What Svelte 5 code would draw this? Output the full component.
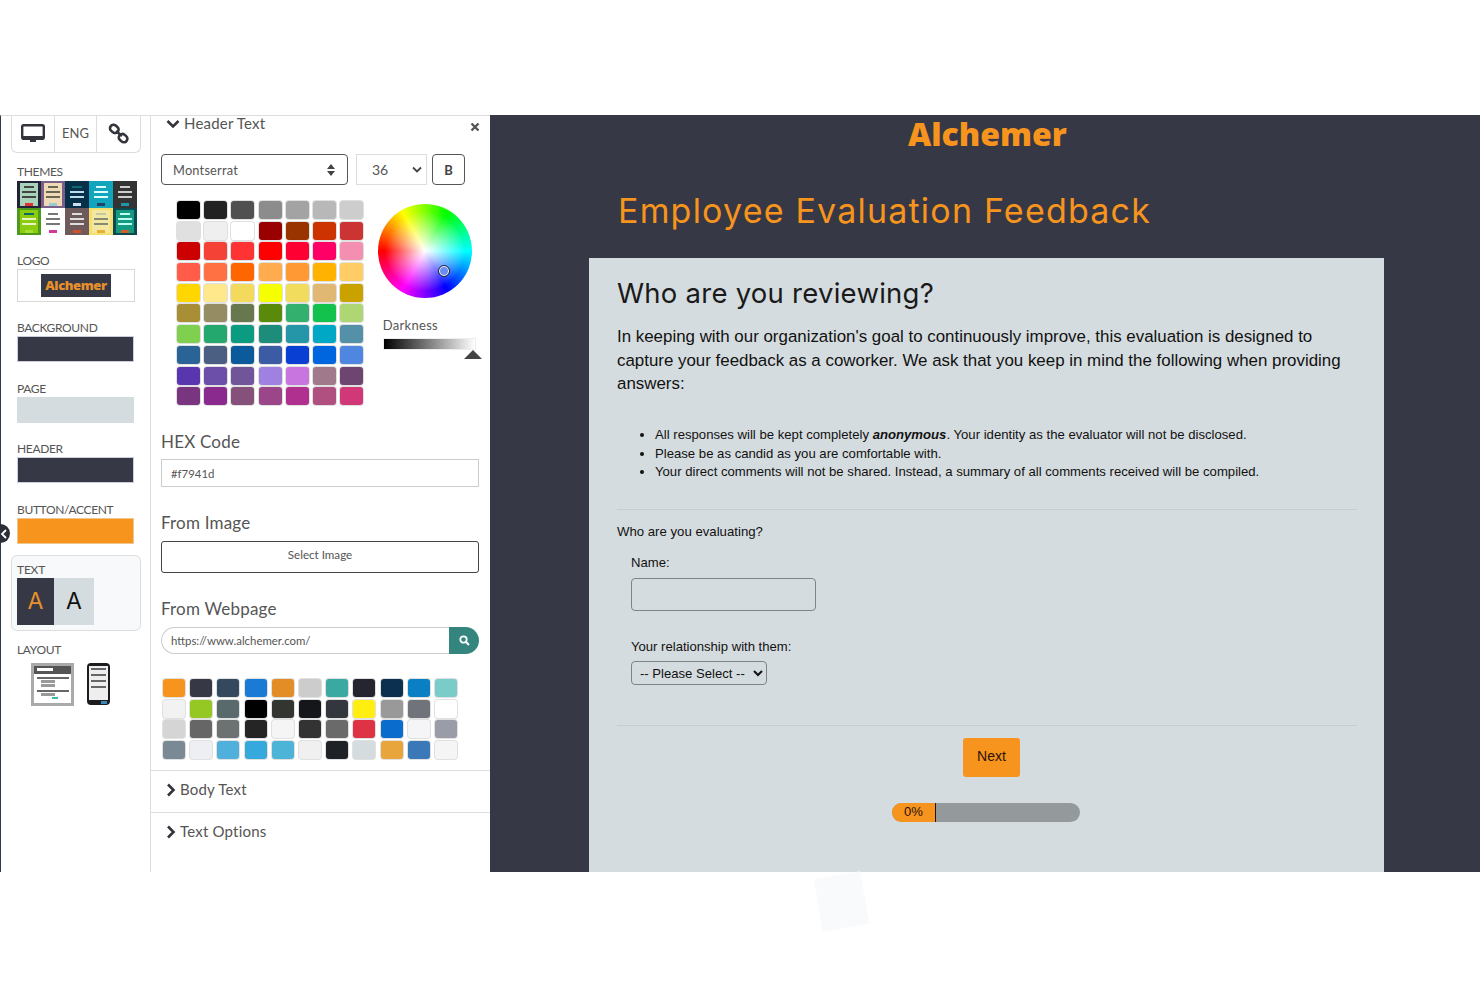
<script lang="ts">
  const themes = [
    { bg: '#232338', page: '#a9d3b8', bar: '#444', accent: '#d33' },
    { bg: '#7a5f8a', page: '#f0d9b5', bar: '#665', accent: '#9cc' },
    { bg: '#06304a', page: '#06304a', bar: '#bde', accent: '#cde', head: '#0c6a70' },
    { bg: '#12a5bd', page: '#12a5bd', bar: '#dff', accent: '#246' },
    { bg: '#333', page: '#333', bar: '#ccc', accent: '#1a9aa8' },
    { bg: '#4e9a1c', page: '#8ccc10', bar: '#e8f5c0', accent: '#a5e030', head: '#0c6a60' },
    { bg: '#fff', page: '#fff', bar: '#777', accent: '#d03a9a' },
    { bg: '#6e5a5a', page: '#6e5a5a', bar: '#ddd', accent: '#d0502a' },
    { bg: '#f5de70', page: '#f2e8a0', bar: '#887', accent: '#e8b030', head: '#c8c8a0' },
    { bg: '#0a4a50', page: '#149a80', bar: '#bfe', accent: '#d0602a' },
  ]

  const wheelSwatches = [
    '#000000', '#222222', '#505050', '#8c8c8c', '#a3a3a3', '#b8b8b8', '#cdcdcd',
    '#e0e0e0', '#efefef', '#ffffff', '#990000', '#993300', '#cc3300', '#cc3333',
    '#cc0000', '#f44336', '#ff3333', '#ff0000', '#ff0033', '#ff0066', '#f48fb1',
    '#ff5c49', '#ff7043', '#ff6600', '#ffab50', '#ff9933', '#ffb300', '#ffcc66',
    '#ffd600', '#ffe88c', '#f3d95c', '#f5ff00', '#f2dc5d', '#e0b873', '#c9a200',
    '#a88f35', '#968c64', '#68784e', '#5a8a0a', '#33b06d', '#12c24c', '#aed672',
    '#80d050', '#24a86d', '#0a9b80', '#1e8c7a', '#2596a8', '#00a8c6', '#5490a8',
    '#2a6496', '#4a5f82', '#0a5a9c', '#3b5ba5', '#0a3fd4', '#0066e0', '#4f87e0',
    '#5a35b0', '#6b4fa8', '#70559a', '#a080e0', '#c875e0', '#a07a8a', '#6e4470',
    '#7a3580', '#8a2a8e', '#85507a', '#9a4688', '#b03090', '#b05080', '#d03878',
  ]

  const pageSwatches = [
    '#f7941d', '#363845', '#34495e', '#1a7ad4', '#e38d27', '#cccccc', '#3aa9a2', '#25252f', '#0b3050', '#0a7fc4', '#7accc8',
    '#f2f2f2', '#95c823', '#5a6a6c', '#000000', '#333530', '#15161a', '#33363c', '#ffee10', '#999999', '#70737a', '#ffffff',
    '#d5d5d5', '#666666', '#6c7272', '#252525', '#f5f5f5', '#333333', '#6a6a6a', '#dd3344', '#0a6ccc', '#f5f5f8', '#9a9ca8',
    '#7a8a94', '#eeeff2', '#4fb0dc', '#35a8dc', '#4db4d8', '#f0f0f0', '#1e2226', '#d5dcdf', '#e8a53c', '#3a78b8', '#f5f5f5',
  ]
</script>

<div class="screen">
  <div class="editor">
    <aside class="rail">
      <div class="tabs">
        <div class="tab">
          <svg width="24" height="20" viewBox="0 0 24 20">
            <rect x="1.2" y="1.2" width="21.6" height="13.6" rx="1.5" fill="none" stroke="#33343c" stroke-width="2.4" />
            <rect x="1" y="12" width="22" height="3.5" fill="#33343c" />
            <rect x="9" y="15" width="6" height="3" fill="#33343c" />
          </svg>
        </div>
        <div class="tab eng">ENG</div>
        <div class="tab">
          <svg width="22" height="22" viewBox="0 0 22 22">
            <rect x="1.8" y="2.4" width="9" height="7" rx="3.4" transform="rotate(40 6.3 5.9)" fill="none" stroke="#33343c" stroke-width="2.6" />
            <rect x="10.6" y="11.6" width="9" height="7" rx="3.4" transform="rotate(40 15.1 15.1)" fill="none" stroke="#33343c" stroke-width="2.6" />
            <line x1="8" y1="8" x2="14" y2="13" stroke="#33343c" stroke-width="2.6" />
          </svg>
        </div>
      </div>

      <div class="rail-label themes-label">THEMES</div>
      <div class="themes">
        {#each themes as t}
          <div class="thumb" style="background: {t.bg}">
            <div class="thumb-page" style="background: {t.page}">
              <i style="background: {t.head ?? t.bar}; width: 60%"></i>
              <i style="background: {t.bar}"></i>
              <i style="background: {t.bar}"></i>
              <b style="background: {t.accent}"></b>
            </div>
          </div>
        {/each}
      </div>

      <div class="rail-label tight">LOGO</div>
      <div class="logo-box"><span>Alchemer</span></div>

      <div class="rail-label tight">BACKGROUND</div>
      <div class="swatch dark"></div>
      <div class="rail-label">PAGE</div>
      <div class="swatch light"></div>
      <div class="rail-label">HEADER</div>
      <div class="swatch dark"></div>
      <div class="rail-label">BUTTON/ACCENT</div>
      <div class="swatch orange"></div>

      <div class="text-card">
        <div class="card-label">TEXT</div>
        <div class="text-pair">
          <div class="a-dark">A</div>
          <div class="a-light">A</div>
        </div>
      </div>

      <div class="rail-label layout-label">LAYOUT</div>
      <div class="layouts">
        <div class="layout-desk">
          <div class="desk-head"><i></i></div>
          <div class="desk-line"></div>
          <div class="desk-short"></div>
          <div class="desk-short"></div>
          <div class="desk-line"></div>
          <div class="desk-short"></div>
          <div class="desk-btn"></div>
        </div>
        <div class="layout-phone">
          <div class="phone-screen">
            <i></i><i></i><i></i><i></i>
          </div>
          <div class="phone-dot"></div>
        </div>
      </div>

      <div class="collapse">
        <svg width="8" height="10" viewBox="0 0 8 10"><path d="M6 1 2 5l4 4" fill="none" stroke="#fff" stroke-width="1.8" /></svg>
      </div>
    </aside>

    <section class="panel">
      <div class="panel-body">
        <div class="panel-head">
          <div class="acc-title">
            <svg width="14" height="10" viewBox="0 0 14 10"><path d="M1.5 2 7 7.5 12.5 2" fill="none" stroke="#33343c" stroke-width="2.6" /></svg>
            Header Text
          </div>
          <svg class="close" width="10" height="10" viewBox="0 0 10 10"><path d="M1.5 1.5l7 7m0-7l-7 7" stroke="#555" stroke-width="2.4" /></svg>
        </div>

        <div class="font-row">
          <div class="font-select">
            Montserrat
            <svg width="8" height="12" viewBox="0 0 8 12"><path d="M4 0 8 5H0zM4 12 0 7h8z" fill="#444" /></svg>
          </div>
          <div class="size-select">
            36
            <svg width="10" height="7" viewBox="0 0 10 7"><path d="M1 1.5l4 4 4-4" fill="none" stroke="#444" stroke-width="1.8" /></svg>
          </div>
          <div class="bold-btn">B</div>
        </div>

        <div class="picker">
          <div class="wheel-grid">
            {#each wheelSwatches as c}
              <div class="chip" style="background: {c}"></div>
            {/each}
          </div>
          <div class="wheel-side">
            <div class="wheel"><span class="knob"></span></div>
            <div class="darkness-label">Darkness</div>
            <div class="darkness">
              <span class="darkness-arrow"></span>
            </div>
          </div>
        </div>

        <div class="field-title hex-title">HEX Code</div>
        <input class="text-input" value="#f7941d" />

        <div class="field-title image-title">From Image</div>
        <button class="select-image">Select Image</button>

        <div class="field-title web-title">From Webpage</div>
        <div class="url-row">
          <input class="url-input" value="https://www.alchemer.com/" />
          <div class="url-search">
            <svg width="11" height="11" viewBox="0 0 11 11"><circle cx="4.5" cy="4.5" r="3.2" fill="none" stroke="#fff" stroke-width="1.8" /><path d="M7 7l3 3" stroke="#fff" stroke-width="2" /></svg>
          </div>
        </div>

        <div class="page-grid">
          {#each pageSwatches as c}
            <div class="chip" style="background: {c}"></div>
          {/each}
        </div>
      </div>

      <div class="acc-row">
        <div class="acc-title">
          <svg width="10" height="14" viewBox="0 0 10 14"><path d="M2 1.5 7.5 7 2 12.5" fill="none" stroke="#33343c" stroke-width="2.6" /></svg>
          Body Text
        </div>
      </div>
      <div class="acc-row">
        <div class="acc-title">
          <svg width="10" height="14" viewBox="0 0 10 14"><path d="M2 1.5 7.5 7 2 12.5" fill="none" stroke="#33343c" stroke-width="2.6" /></svg>
          Text Options
        </div>
      </div>
    </section>

    <main class="survey">
      <div class="brand">Alchemer</div>
      <h1>Employee Evaluation Feedback</h1>
      <div class="sheet">
        <h2>Who are you reviewing?</h2>
        <p class="intro">In keeping with our organization's goal to continuously improve, this evaluation is designed to capture your feedback as a coworker. We ask that you keep in mind the following when providing answers:</p>
        <ul>
          <li>All responses will be kept completely <b><em>anonymous</em></b>. Your identity as the evaluator will not be disclosed.</li>
          <li>Please be as candid as you are comfortable with.</li>
          <li>Your direct comments will not be shared. Instead, a summary of all comments received will be compiled.</li>
        </ul>
        <hr />
        <div class="question">Who are you evaluating?</div>
        <div class="sub">
          <label class="name-label" for="name">Name:</label>
          <input id="name" class="name-input" />
          <label class="rel-label" for="rel">Your relationship with them:</label>
          <select id="rel" class="rel-select"><option>-- Please Select --</option></select>
        </div>
        <hr class="second" />
        <div class="actions"><button class="next">Next</button></div>
        <div class="progress">
          <div class="progress-fill">0%</div>
        </div>
      </div>
    </main>
  </div>
  <div class="ghost"></div>
</div>

<style>
  :global(body) {
    margin: 0;
    background: #fff;
  }

  .screen {
    position: relative;
    height: 987px;
    padding-top: 115px;
    box-sizing: border-box;
    overflow: hidden;
    font-family: Lato, "Open Sans", sans-serif;
    color: #555;
  }

  .editor {
    display: flex;
    height: 757px;
  }

  .rail {
    position: relative;
    width: 151px;
    flex: none;
    box-sizing: border-box;
    padding: 0 0 0 10px;
    border-left: 1px solid #2f3a4a;
    border-right: 1px solid #ddd;
    border-top: 1px solid #ddd;
  }

  .tabs {
    display: flex;
    width: 130px;
    height: 37px;
    box-sizing: border-box;
    border: 1px solid #ddd;
    border-top: none;
    border-radius: 0 0 6px 6px;
  }

  .tab {
    display: flex;
    align-items: center;
    justify-content: center;
    font-size: 14px;
    color: #555;
    border-right: 1px solid #ddd;
    width: 42px;
  }

  .tab:last-child { border-right: none; flex: 1; }

  .eng {
    font-size: 13px;
    padding-bottom: 2px;
    box-sizing: border-box;
  }

  .rail-label {
    margin: 22.5px 0 0 6px;
    height: 8px;
    line-height: 8px;
    font-size: 12px;
    color: #555;
    letter-spacing: -0.35px;
  }

  .themes-label { margin-top: 15px; }
  .tight { margin-top: 22px; }

  .themes {
    display: grid;
    grid-template-columns: repeat(5, 24px);
    grid-auto-rows: 27px;
    margin: 5px 0 0 6px;
    width: 120px;
  }

  .thumb {
    padding: 2px 3px;
    box-sizing: border-box;
  }

  .thumb-page {
    height: 100%;
    display: flex;
    flex-direction: column;
    align-items: center;
    gap: 3px;
    padding-top: 3px;
    box-sizing: border-box;
  }

  .thumb-page i {
    display: block;
    width: 80%;
    height: 2px;
  }

  .thumb-page b {
    display: block;
    width: 40%;
    height: 3px;
    margin-top: 2px;
  }

  .logo-box {
    display: flex;
    align-items: center;
    justify-content: center;
    width: 118px;
    height: 33px;
    box-sizing: border-box;
    margin: 4px 0 0 6px;
    border: 1px solid #d8d8d8;
  }

  .logo-box span {
    display: block;
    width: 70px;
    height: 23px;
    text-align: center;
    background: #363845;
    color: #e8912a;
    font: 800 13px/23px "Open Sans", sans-serif;
    letter-spacing: -0.4px;
  }

  .swatch {
    width: 117px;
    height: 26px;
    box-sizing: border-box;
    margin: 4px 0 0 6px;
    border: 1px solid #ccd;
  }

  .dark { background: #363845; }
  .light { background: #d5dcdf; border-color: #d5dcdf; }
  .orange { background: #f7941d; border-color: #eec58f; }

  .text-card {
    width: 130px;
    height: 76px;
    box-sizing: border-box;
    margin-top: 11px;
    padding: 10px 6px 0 5px;
    border: 1px solid #ddd;
    border-radius: 6px;
    background: #f8f9fb;
  }

  .card-label {
    height: 8px;
    line-height: 8px;
    font-size: 12px;
    letter-spacing: -0.2px;
  }

  .text-pair {
    display: flex;
    margin-top: 4px;
    height: 47px;
  }

  .a-dark, .a-light {
    display: flex;
    align-items: center;
    justify-content: center;
    font-family: Inter, sans-serif;
    font-size: 23px;
  }

  .a-dark {
    width: 37px;
    background: #363845;
    color: #e8912a;
  }

  .a-light {
    width: 40px;
    background: #d5dcdf;
    color: #111;
  }

  .layout-label { margin-top: 15px; }

  .layouts {
    display: flex;
    align-items: flex-start;
    gap: 13px;
    margin: 9px 0 0 20px;
  }

  .layout-desk {
    width: 43px;
    height: 43px;
    box-sizing: border-box;
    border: 3px solid #aaa;
    background: #fff;
    padding-right: 2px;
  }

  .desk-head {
    height: 8px;
    background: #555;
    padding: 2px 0 0 3px;
    margin-right: -2px;
    box-sizing: border-box;
  }

  .desk-head i {
    display: block;
    width: 16px;
    height: 3px;
    background: #fff;
  }

  .desk-line {
    height: 2px;
    margin: 3px 0 0 3px;
    background: #666;
  }

  .desk-short {
    width: 14px;
    height: 3px;
    margin: 1px 0 0 7px;
    background: #999;
  }

  .desk-btn {
    width: 6px;
    height: 2px;
    margin: 1px 0 0 18px;
    background: #3ba;
  }

  .layout-phone {
    display: flex;
    flex-direction: column;
    width: 23px;
    height: 42px;
    box-sizing: border-box;
    padding: 3px 2px 1px;
    background: #1c1c20;
    border-radius: 4px;
  }

  .phone-screen {
    flex: 1;
    background: #eee;
    display: flex;
    flex-direction: column;
    gap: 4px;
    padding: 2px;
    box-sizing: border-box;
  }

  .phone-screen i {
    display: block;
    height: 2px;
    background: #666;
  }

  .phone-dot {
    width: 6px;
    height: 3px;
    margin: 1px 1px 0 auto;
    background: #3a86b8;
  }

  .collapse {
    position: absolute;
    left: -10px;
    top: 408px;
    width: 19px;
    height: 19px;
    border-radius: 50%;
    background: #2c2e38;
    display: flex;
    align-items: center;
    justify-content: center;
    padding-left: 6px;
    box-sizing: border-box;
  }

  .panel {
    width: 339px;
    flex: none;
    box-sizing: border-box;
    border-top: 1px solid #ddd;
  }

  .panel-body {
    height: 654px;
    box-sizing: border-box;
    padding: 0 10px;
  }

  .panel-head {
    display: flex;
    align-items: flex-start;
    justify-content: space-between;
    height: 17px;
    padding: 0 0 0 5px;
  }

  .close {
    margin-top: 6px;
  }

  .acc-title {
    display: flex;
    align-items: center;
    gap: 4px;
    font-size: 15px;
    line-height: 15px;
    color: #555;
    letter-spacing: 0.2px;
    white-space: nowrap;
  }

  .font-row {
    display: flex;
    gap: 8px;
    margin-top: 21px;
  }

  .font-select {
    display: flex;
    align-items: center;
    justify-content: space-between;
    width: 187px;
    height: 31px;
    box-sizing: border-box;
    padding: 0 12px 0 11px;
    border: 1px solid #555;
    border-radius: 4px;
    font-size: 12.8px;
    letter-spacing: 0.2px;
  }

  .size-select {
    display: flex;
    align-items: center;
    justify-content: space-between;
    width: 71px;
    height: 31px;
    box-sizing: border-box;
    padding: 0 4px 0 15px;
    border: 1px solid #ddd;
    font-size: 14px;
  }

  .bold-btn {
    width: 33px;
    height: 31px;
    margin-left: -3px;
    box-sizing: border-box;
    border: 1px solid #555;
    border-radius: 4px;
    display: flex;
    align-items: center;
    justify-content: center;
    font-size: 13px;
    font-weight: 700;
    color: #444;
  }

  .picker {
    display: flex;
    margin-top: 16px;
  }

  .wheel-grid {
    display: grid;
    grid-template-columns: repeat(7, 23px);
    grid-auto-rows: 18px;
    column-gap: 4.2px;
    row-gap: 2.7px;
    margin-left: 16px;
  }

  .chip {
    border-radius: 3px;
    box-shadow: 0 0 0 1px rgba(0, 0, 0, 0.12);
  }

  .wheel-side {
    margin-left: 14.6px;
    position: relative;
  }

  .wheel {
    position: relative;
    width: 94px;
    height: 94px;
    margin-top: 3px;
    border-radius: 50%;
    background:
      radial-gradient(circle closest-side, #fff 0%, rgba(255, 255, 255, 0) 85%),
      conic-gradient(from 30deg, #0f0, #0ff, #00f, #f0f, #f00, #ff0, #0f0);
  }

  .knob {
    position: absolute;
    left: 60px;
    top: 61px;
    width: 12px;
    height: 12px;
    box-sizing: border-box;
    border: 1px solid #223;
    box-shadow: inset 0 0 0 1px #fff;
    border-radius: 50%;
    background: #6b8cf0;
  }

  .darkness-label {
    margin: 21px 0 0 5px;
    height: 12px;
    line-height: 12px;
    font-size: 13px;
    letter-spacing: 0.3px;
  }

  .darkness {
    position: relative;
    width: 93px;
    height: 12px;
    margin: 7px 0 0 5px;
    background: linear-gradient(to right, #000, #fff);
    border: 1px solid #eee;
    box-sizing: border-box;
  }

  .darkness-arrow {
    position: absolute;
    right: -7px;
    top: 11px;
    width: 0;
    height: 0;
    border-left: 9px solid transparent;
    border-right: 9px solid transparent;
    border-bottom: 9px solid #444;
  }

  .field-title {
    font-size: 17px;
    line-height: 20px;
    color: #555;
    letter-spacing: 0.2px;
  }

  .hex-title { margin-top: 27px; }
  .image-title { margin-top: 26px; }
  .web-title { margin-top: 26px; }

  .text-input {
    display: block;
    width: 318px;
    height: 28px;
    box-sizing: border-box;
    margin-top: 7px;
    padding: 0 9px;
    border: 1px solid #ccc;
    font: 11.4px Lato, sans-serif;
    color: #555;
    background: #fff;
  }

  .select-image {
    display: block;
    width: 318px;
    height: 32px;
    margin-top: 8px;
    box-sizing: border-box;
    border: 1px solid #444;
    border-radius: 3px;
    background: #fff;
    font: 11.6px Lato, sans-serif;
    color: #555;
    padding: 0 0 5px;
  }

  .url-row {
    display: flex;
    width: 318px;
    height: 27px;
    margin-top: 8px;
  }

  .url-input {
    flex: 1;
    min-width: 0;
    box-sizing: border-box;
    padding: 0 9px;
    border: 1px solid #ccc;
    border-right: none;
    border-radius: 14px 0 0 14px;
    font: 11.4px Lato, sans-serif;
    color: #555;
  }

  .url-search {
    width: 30px;
    background: #35857f;
    border-radius: 0 14px 14px 0;
    display: flex;
    align-items: center;
    justify-content: center;
  }

  .page-grid {
    display: grid;
    grid-template-columns: repeat(11, 22px);
    grid-auto-rows: 18px;
    column-gap: 5.2px;
    row-gap: 2.5px;
    margin: 25px 0 0 2px;
  }

  .acc-row {
    display: flex;
    align-items: center;
    height: 41px;
    padding: 0 0 0 15px;
    border-top: 1px solid #ddd;
  }

  .acc-row .acc-title {
    margin-top: -4px;
  }

  .survey {
    flex: 1;
    min-width: 0;
    background: #363845;
    font-family: "Liberation Sans", Arial, sans-serif;
    color: #111;
  }

  .brand {
    margin: 0 0 0 418px;
    height: 38px;
    line-height: 38px;
    font-family: "Open Sans", sans-serif;
    font-weight: 800;
    font-size: 32px;
    color: #f7941d;
    white-space: nowrap;
  }

  h1 {
    margin: 37px 0 0 128px;
    height: 42px;
    line-height: 42px;
    font-family: Inter, sans-serif;
    font-weight: 400;
    font-size: 34px;
    letter-spacing: 1.2px;
    color: #f7941d;
    white-space: nowrap;
  }

  .sheet {
    width: 795px;
    height: 614px;
    box-sizing: border-box;
    margin: 26px 0 0 99px;
    padding: 16px 27px 0 28px;
    background: #d5dcdf;
  }

  h2 {
    margin: 0;
    height: 38px;
    line-height: 38px;
    font-family: Inter, sans-serif;
    font-weight: 400;
    font-size: 27.5px;
    letter-spacing: 0.25px;
    color: #1a1a1a;
    white-space: nowrap;
  }

  .intro {
    margin: 13px 0 0;
    font-size: 16.9px;
    line-height: 23.5px;
    color: #111;
  }

  ul {
    margin: 30.5px 0 0;
    padding: 0 0 0 38px;
    font-size: 13.15px;
    line-height: 18.7px;
  }

  hr {
    height: 1px;
    margin: 26.5px 0 0;
    border: none;
    background: #c5cdd0;
  }

  .question {
    margin-top: 14px;
    height: 15px;
    line-height: 15px;
    font-size: 13.2px;
  }

  .sub {
    padding-left: 14px;
  }

  .name-label, .rel-label {
    display: block;
    height: 15px;
    line-height: 15px;
    font-size: 13.1px;
  }

  .name-label { margin-top: 16.5px; }

  .name-input {
    display: block;
    width: 185px;
    height: 33px;
    box-sizing: border-box;
    margin-top: 8px;
    border: 1px solid #7c8488;
    border-radius: 4px;
    background: #d5dcdf;
  }

  .rel-label { margin-top: 28px; }

  .rel-select {
    display: block;
    width: 136px;
    height: 24px;
    box-sizing: border-box;
    margin-top: 7px;
    padding: 0 0 0 4px;
    border: 1px solid #7c8488;
    border-radius: 4px;
    background: #d5dcdf;
    font: 13.1px "Liberation Sans", Arial, sans-serif;
    color: #111;
  }

  .second { margin-top: 40px; }

  .actions {
    display: flex;
    margin-top: 12px;
    padding-left: 346px;
  }

  .next {
    width: 57px;
    height: 39px;
    border: none;
    border-radius: 3px;
    background: #f7941d;
    font: 14px "Liberation Sans", Arial, sans-serif;
    color: #2a1208;
    padding: 0 0 3px;
  }

  .progress {
    width: 188px;
    height: 19px;
    margin: 26px 0 0 275px;
    border-radius: 10px;
    background: #949a9c;
    overflow: hidden;
  }

  .progress-fill {
    width: 44px;
    height: 100%;
    box-sizing: border-box;
    border-right: 1.5px solid #2a1208;
    background: #f7941d;
    font-size: 13px;
    line-height: 18px;
    text-align: center;
    color: #2a1208;
  }

  .ghost {
    position: absolute;
    left: 818px;
    top: 875px;
    width: 47px;
    height: 53px;
    background: #f9fafc;
    transform: rotate(-10deg);
  }
</style>
